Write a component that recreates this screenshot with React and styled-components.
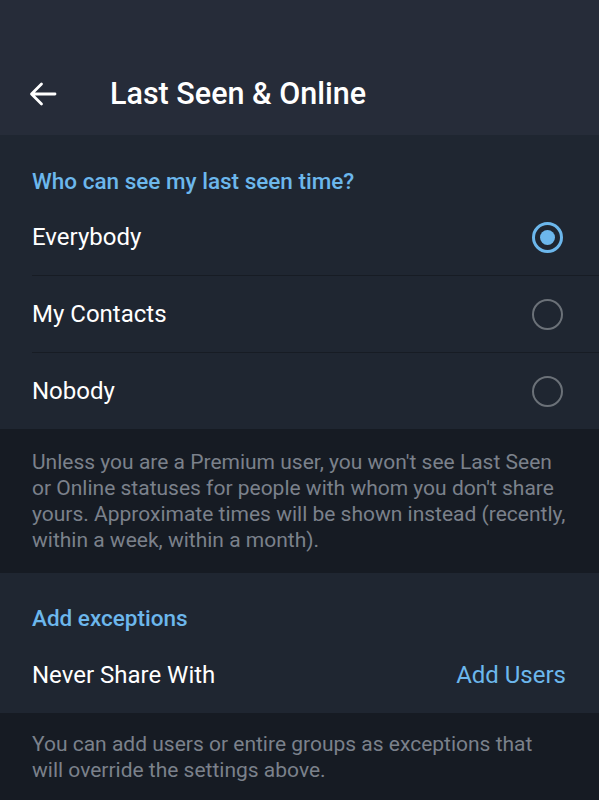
import React, { useState } from "react";
import styled, { createGlobalStyle } from "styled-components";

const GlobalStyle = createGlobalStyle`
  html, body {
    margin: 0;
    padding: 0;
    background: #161b23;
  }
  body {
    font-family: Roboto, "Noto Sans", "Liberation Sans", sans-serif;
    -webkit-font-smoothing: antialiased;
  }
`;

const Screen = styled.div`
  width: 599px;
  min-height: 800px;
  background: #161b23;
  display: flex;
  flex-direction: column;
`;

const TopBar = styled.header`
  height: 135px;
  background: #262c39;
  display: flex;
  align-items: flex-end;
  padding: 0 0 24px 28px;
  box-sizing: border-box;
  gap: 52px;
`;

const BackButton = styled.button`
  width: 30px;
  height: 30px;
  padding: 0;
  border: 0;
  background: none;
  display: flex;
  align-items: center;
  justify-content: center;
  margin-bottom: 2px;
`;

const Title = styled.h1`
  margin: 0;
  color: #ffffff;
  font-size: 30.5px;
  font-weight: 500;
  line-height: 34px;
`;

const Section = styled.section`
  background: #1f2631;
`;

const SectionTitle = styled.div`
  padding: ${(p) => p.top || 33}px 32px 5px;
  color: #6cb7ec;
  font-size: 22.5px;
  font-weight: 500;
  line-height: 26px;
`;

const Row = styled.div`
  height: ${(p) => p.h || 76}px;
  margin-left: 32px;
  padding-right: 33px;
  display: flex;
  align-items: center;
  justify-content: space-between;
  border-bottom: ${(p) => (p.divider ? "1px solid #171c24" : "none")};
  cursor: pointer;
`;

const Label = styled.span`
  color: #ffffff;
  font-size: 24px;
  line-height: 28px;
`;

const ActionText = styled.span`
  color: #6cb7ec;
  font-size: 24px;
  line-height: 28px;
`;

const Radio = styled.span`
  width: 31px;
  height: 31px;
  margin-right: 3px;
  box-sizing: border-box;
  border-radius: 50%;
  border: ${(p) => (p.checked ? "3.5px solid #6cb7ec" : "2.5px solid #6b7178")};
  display: flex;
  align-items: center;
  justify-content: center;

  &::after {
    content: "";
    width: 15px;
    height: 15px;
    border-radius: 50%;
    background: #6cb7ec;
    display: ${(p) => (p.checked ? "block" : "none")};
  }
`;

const Hint = styled.p`
  margin: 0;
  padding: ${(p) => p.pad || "20px 32px 20px"};
  color: #7b818b;
  font-size: 21px;
  line-height: 26px;
`;

const options = ["Everybody", "My Contacts", "Nobody"];

export default function App() {
  const [choice, setChoice] = useState("Everybody");

  return (
    <>
      <GlobalStyle />
      <Screen>
        <TopBar>
          <BackButton aria-label="Back">
            <svg width="28" height="24" viewBox="0 0 28 24" fill="none">
              <path
                d="M26 12H3M12.5 2L2.5 12l10 10"
                stroke="#ffffff"
                strokeWidth="2.8"
                strokeLinecap="round"
                strokeLinejoin="round"
              />
            </svg>
          </BackButton>
          <Title>Last Seen &amp; Online</Title>
        </TopBar>

        <Section>
          <SectionTitle>Who can see my last seen time?</SectionTitle>
          {options.map((o, i) => (
            <Row
              key={o}
              divider={i < options.length - 1}
              onClick={() => setChoice(o)}
            >
              <Label>{o}</Label>
              <Radio checked={choice === o} />
            </Row>
          ))}
        </Section>

        <Hint>
          Unless you are a Premium user, you won't see Last Seen or Online
          statuses for people with whom you don't share yours. Approximate
          times will be shown instead (recently, within a week, within a
          month).
        </Hint>

        <Section>
          <SectionTitle top={32}>Add exceptions</SectionTitle>
          <Row h={77}>
            <Label>Never Share With</Label>
            <ActionText>Add Users</ActionText>
          </Row>
        </Section>

        <Hint pad="18px 32px 20px">
          You can add users or entire groups as exceptions that will override
          the settings above.
        </Hint>
      </Screen>
    </>
  );
}
